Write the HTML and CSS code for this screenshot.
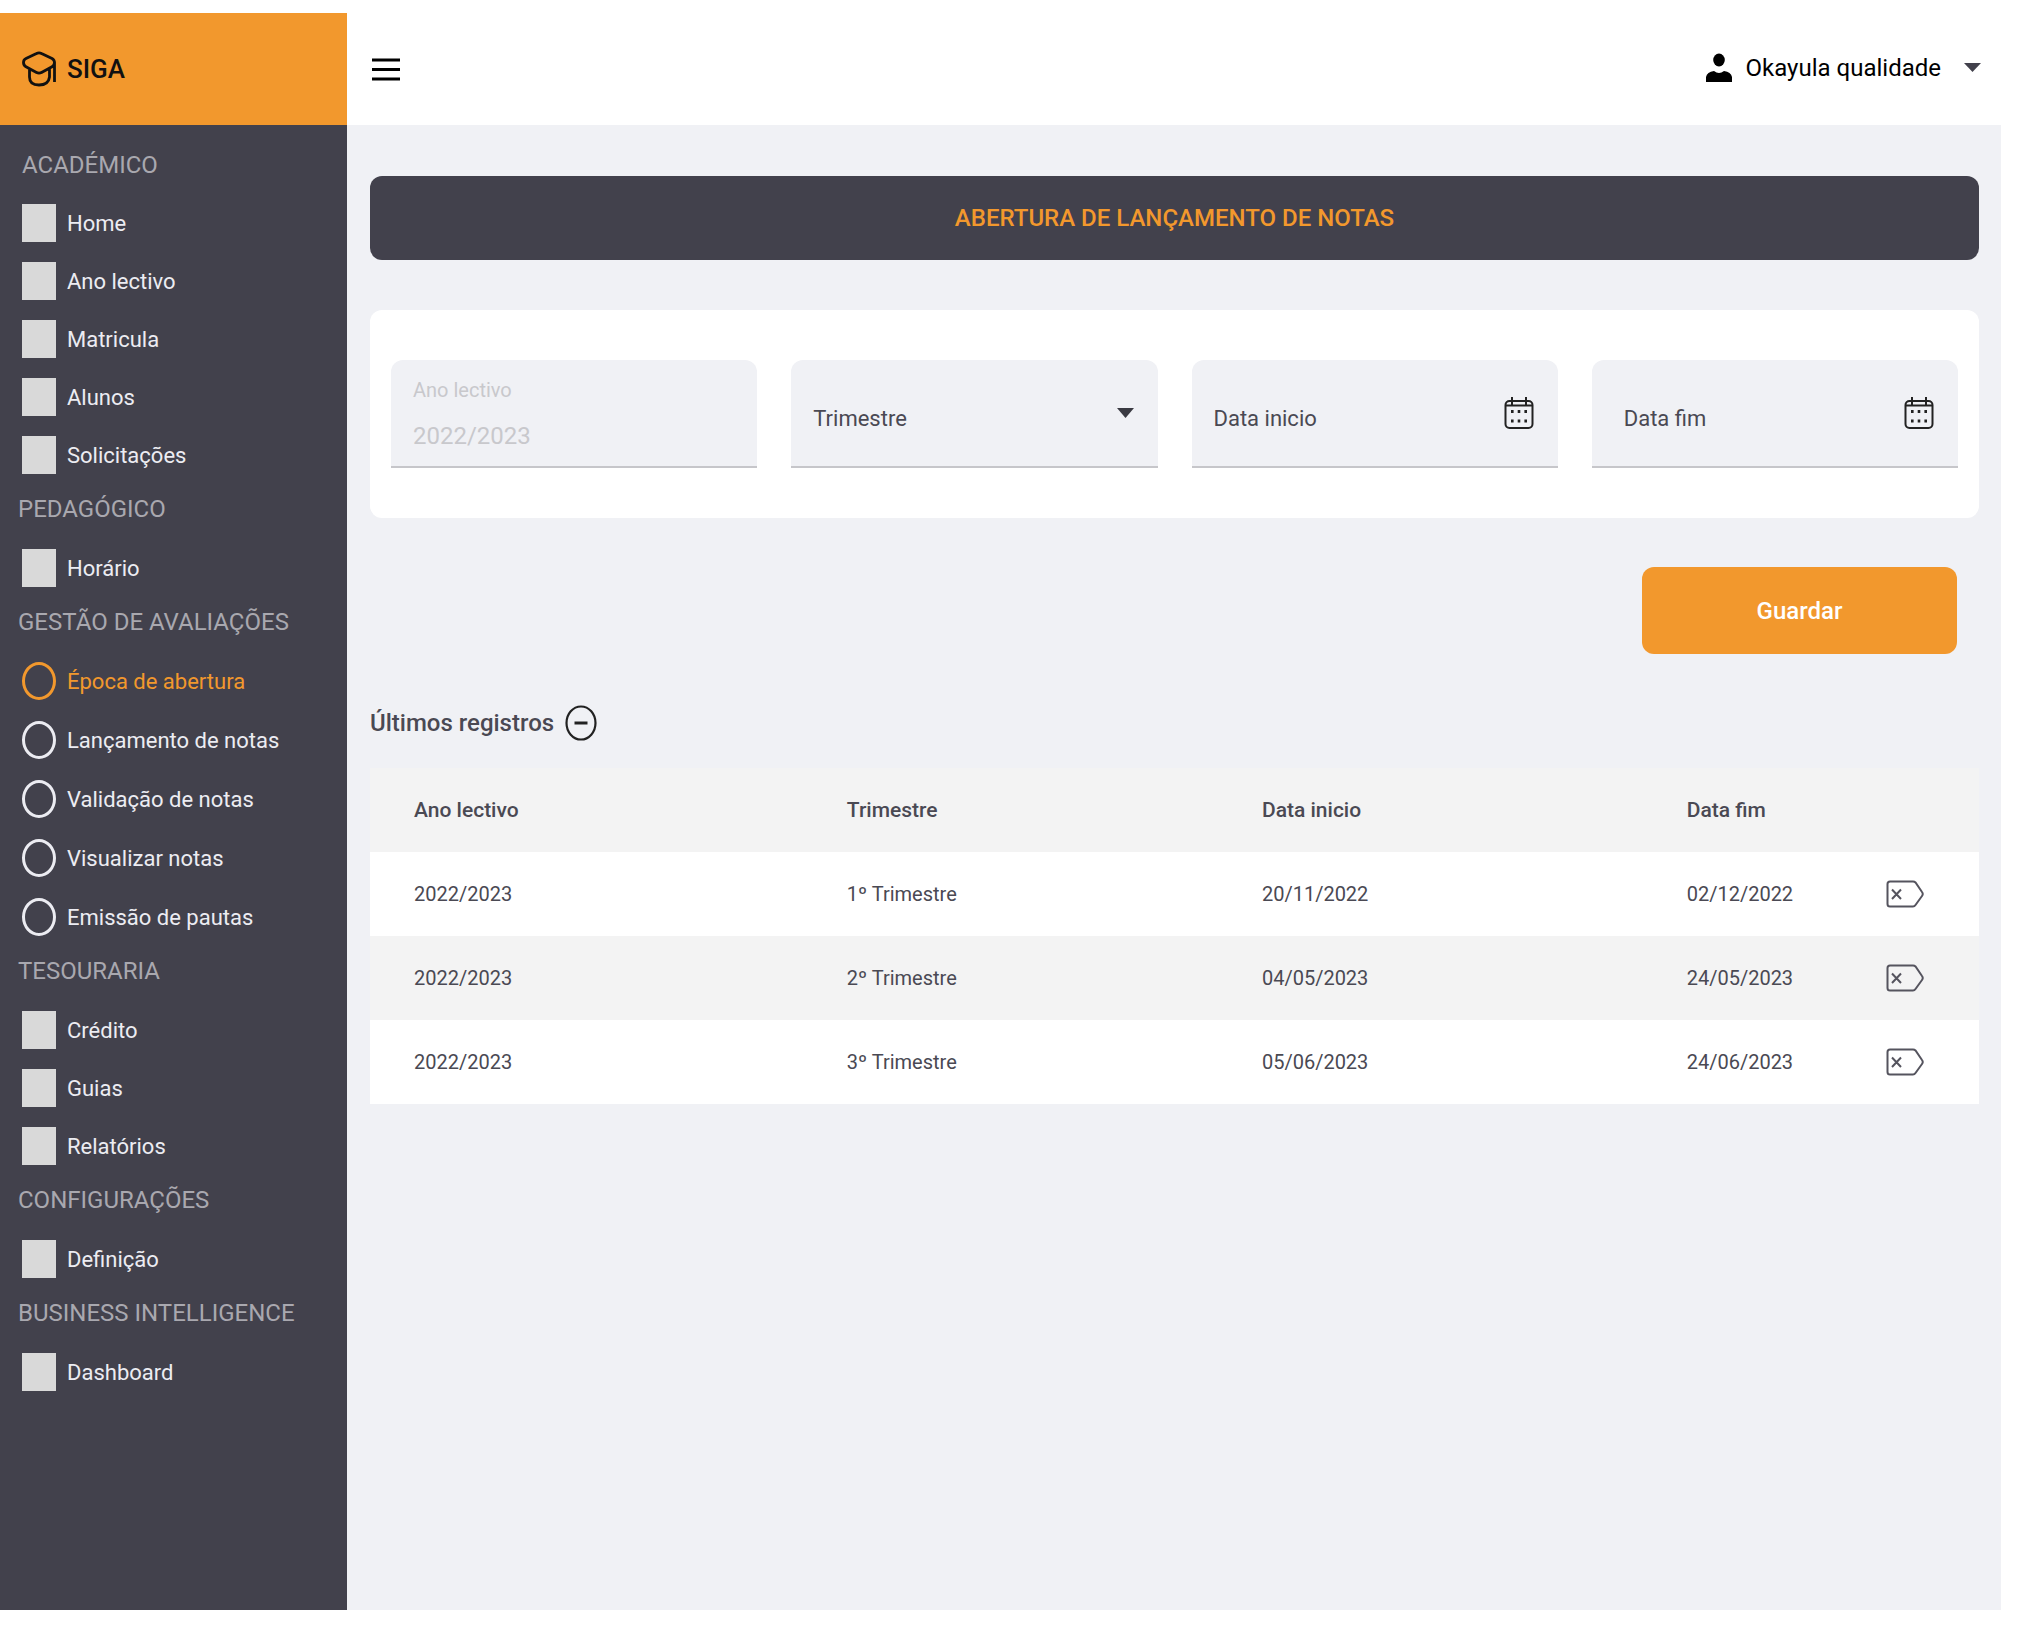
FILE: index.html
```html
<!DOCTYPE html>
<html lang="pt">
<head>
<meta charset="utf-8">
<meta name="viewport" content="width=device-width, initial-scale=1">
<title>SIGA – Abertura de lançamento de notas</title>
<link rel="stylesheet" href="styles.css">
</head>
<body>
<svg class="sprite" aria-hidden="true">
  <symbol id="calendar" viewBox="0 0 30 34">
    <rect x="1.5" y="5" width="27" height="27" rx="4" fill="none" stroke="currentColor" stroke-width="2"/>
    <path d="M2 9.500H28M8 1V10M22 1V10" fill="none" stroke="currentColor" stroke-width="2"/>
    <path d="M7 15.500h2.600M13.700 15.500h2.600M20.400 15.500h2.600M7 25h2.600M13.700 25h2.600M20.400 25h2.600" stroke="currentColor" stroke-width="3"/>
  </symbol>
  <symbol id="remove" viewBox="0 0 38 28">
    <path d="M4 1.500H27Q28.500 1.500 29.500 2.500L36 12Q37.500 14 36 16L29.500 25Q28.500 26.500 27 26.500H4Q1.500 26.500 1.500 24V4Q1.500 1.500 4 1.500Z" fill="none" stroke="currentColor" stroke-width="2"/>
    <path d="M6 9.500L15 19M15 9.500L6 19" fill="none" stroke="currentColor" stroke-width="2"/>
  </symbol>
</svg>
<div class="app">
  <aside class="sidebar">
    <a class="brand" href="#">
      <svg class="brand-icon" viewBox="0 0 34 36" aria-hidden="true">
        <path d="M14.500 2.500Q17 1.200 19.500 2.500L30 7.500Q32.500 9 32.500 11.500T30 15.800L19.500 21.500Q17 22.800 14.500 21.500L4 15.800Q1.500 14.300 1.500 11.500T4 7.500ZM7.500 18V26Q7.500 34 17 34T27.500 26V18M32.500 11V31" fill="none" stroke="currentColor" stroke-width="2.800"/>
      </svg>
      <span>SIGA</span>
    </a>
    <nav class="menu" aria-label="Principal">
      <h2 class="menu-title menu-title-first">ACADÉMICO</h2>
      <ul class="menu-list">
        <li><a class="menu-link" href="#"><span class="square"></span>Home</a></li>
        <li><a class="menu-link" href="#"><span class="square"></span>Ano lectivo</a></li>
        <li><a class="menu-link" href="#"><span class="square"></span>Matricula</a></li>
        <li><a class="menu-link" href="#"><span class="square"></span>Alunos</a></li>
        <li><a class="menu-link" href="#"><span class="square"></span>Solicitações</a></li>
      </ul>
      <h2 class="menu-title">PEDAGÓGICO</h2>
      <ul class="menu-list">
        <li><a class="menu-link" href="#"><span class="square"></span>Horário</a></li>
      </ul>
      <h2 class="menu-title">GESTÃO DE AVALIAÇÕES</h2>
      <ul class="menu-list menu-list-spaced">
        <li><a class="menu-link active" href="#" aria-current="page"><span class="circle"></span>Época de abertura</a></li>
        <li><a class="menu-link" href="#"><span class="circle"></span>Lançamento de notas</a></li>
        <li><a class="menu-link" href="#"><span class="circle"></span>Validação de notas</a></li>
        <li><a class="menu-link" href="#"><span class="circle"></span>Visualizar notas</a></li>
        <li><a class="menu-link" href="#"><span class="circle"></span>Emissão de pautas</a></li>
      </ul>
      <h2 class="menu-title">TESOURARIA</h2>
      <ul class="menu-list">
        <li><a class="menu-link" href="#"><span class="square"></span>Crédito</a></li>
        <li><a class="menu-link" href="#"><span class="square"></span>Guias</a></li>
        <li><a class="menu-link" href="#"><span class="square"></span>Relatórios</a></li>
      </ul>
      <h2 class="menu-title">CONFIGURAÇÕES</h2>
      <ul class="menu-list">
        <li><a class="menu-link" href="#"><span class="square"></span>Definição</a></li>
      </ul>
      <h2 class="menu-title">BUSINESS INTELLIGENCE</h2>
      <ul class="menu-list">
        <li><a class="menu-link" href="#"><span class="square"></span>Dashboard</a></li>
      </ul>
    </nav>
  </aside>

  <div class="page">
    <header class="topbar">
      <button class="icon-button" type="button" aria-label="Menu">
        <svg width="28" height="23" viewBox="0 0 28 23" aria-hidden="true"><path d="M0 2H28M0 11.500H28M0 21H28" stroke="currentColor" stroke-width="3.200"/></svg>
      </button>
      <button class="user" type="button">
        <svg width="26" height="29" viewBox="0 0 26 29" aria-hidden="true"><ellipse cx="13" cy="7" rx="5.800" ry="6.500"/><path d="M0 29V24Q1 19 8 18Q13 22 18 18Q25 19 26 24V29Z"/></svg>
        <span>Okayula qualidade</span>
        <svg class="user-caret" width="17" height="9" viewBox="0 0 17 9" aria-hidden="true"><path d="M0 0H17L8.500 9Z"/></svg>
      </button>
    </header>

    <main class="content">
      <h1 class="page-title">ABERTURA DE LANÇAMENTO DE NOTAS</h1>

      <form class="form">
        <div class="fields">
          <div class="field field-disabled">
            <label class="field-label" for="ano">Ano lectivo</label>
            <input class="control" id="ano" type="text" value="2022/2023" disabled>
          </div>
          <div class="field">
            <select class="control" aria-label="Trimestre">
              <option>Trimestre</option>
              <option>1º Trimestre</option>
              <option>2º Trimestre</option>
              <option>3º Trimestre</option>
            </select>
            <svg class="select-caret" width="17" height="10" viewBox="0 0 17 10" aria-hidden="true"><path d="M0 0H17L8.500 10Z"/></svg>
          </div>
          <div class="field">
            <input class="control" type="text" placeholder="Data inicio" aria-label="Data inicio">
            <button class="icon-button" type="button" aria-label="Escolher data inicio"><svg width="30" height="34" aria-hidden="true"><use href="#calendar"/></svg></button>
          </div>
          <div class="field field-end">
            <input class="control" type="text" placeholder="Data fim" aria-label="Data fim">
            <button class="icon-button" type="button" aria-label="Escolher data fim"><svg width="30" height="34" aria-hidden="true"><use href="#calendar"/></svg></button>
          </div>
        </div>
        <button class="save" type="submit">Guardar</button>
      </form>

      <section class="records">
        <div class="records-head">
          <h2 class="records-title">Últimos registros</h2>
          <button class="icon-button" type="button" aria-label="Recolher">
            <svg width="32" height="36" viewBox="0 0 32 36" aria-hidden="true"><ellipse cx="16" cy="18" rx="14.500" ry="16.500" fill="none" stroke="currentColor" stroke-width="2.200"/><path d="M9.500 18H22.500" stroke="currentColor" stroke-width="3"/></svg>
          </button>
        </div>
        <table class="table">
          <colgroup><col class="col-year"><col class="col-term"><col class="col-start"><col class="col-end"><col></colgroup>
          <thead>
            <tr><th scope="col">Ano lectivo</th><th scope="col">Trimestre</th><th scope="col">Data inicio</th><th scope="col">Data fim</th><td></td></tr>
          </thead>
          <tbody>
            <tr><td>2022/2023</td><td>1º Trimestre</td><td>20/11/2022</td><td>02/12/2022</td><td><button class="icon-button" type="button" aria-label="Eliminar"><svg width="38" height="28" aria-hidden="true"><use href="#remove"/></svg></button></td></tr>
            <tr><td>2022/2023</td><td>2º Trimestre</td><td>04/05/2023</td><td>24/05/2023</td><td><button class="icon-button" type="button" aria-label="Eliminar"><svg width="38" height="28" aria-hidden="true"><use href="#remove"/></svg></button></td></tr>
            <tr><td>2022/2023</td><td>3º Trimestre</td><td>05/06/2023</td><td>24/06/2023</td><td><button class="icon-button" type="button" aria-label="Eliminar"><svg width="38" height="28" aria-hidden="true"><use href="#remove"/></svg></button></td></tr>
          </tbody>
        </table>
      </section>
    </main>
  </div>
</div>
</body>
</html>
```
FILE: styles.css
```css
:root {
  --orange: #f2982d;
  --dark: #42414c;
  --surface: #f0f1f5;
  --text: #4a4953;
}

* { box-sizing: border-box; }

body {
  margin: 0;
  background: #fff;
  color: var(--text);
  font-family: Roboto, "Liberation Sans", sans-serif;
  font-size: 24px;
}

h1, h2, ul { margin: 0; padding: 0; }

button, input, select { font: inherit; color: inherit; }

.sprite { display: none; }

.app {
  display: flex;
  min-height: 100vh;
  padding: 13px 39px 34px 0;
}

/* Sidebar */
.sidebar {
  flex: 0 0 347px;
  background: var(--dark);
}

.brand {
  display: flex;
  align-items: center;
  gap: 11px;
  height: 112px;
  padding-left: 22px;
  background: var(--orange);
  color: #111;
  font-size: 26px;
  font-weight: 500;
  text-decoration: none;
}

.brand-icon { width: 34px; height: 36px; }

.menu-title {
  height: 55px;
  padding: 9px 0 0 18px;
  color: #a9a8af;
  font-size: 24px;
  font-weight: 400;
  line-height: 32px;
}

.menu-title-first {
  height: 69px;
  padding: 24px 0 0 22px;
}

.menu-list { list-style: none; }

.menu-list-spaced { display: grid; gap: 1px; }

.menu-link {
  display: flex;
  align-items: center;
  gap: 11px;
  height: 58px;
  padding-left: 22px;
  color: #ececf2;
  font-size: 22px;
  text-decoration: none;
}

.menu-link.active { color: var(--orange); }

.square, .circle { width: 34px; height: 38px; }
.square { background: #d9d9d9; }
.circle { border: 3px solid currentColor; border-radius: 50%; }

/* Top bar */
.page {
  flex: 1;
  display: flex;
  flex-direction: column;
  min-width: 0;
}

.topbar {
  display: flex;
  align-items: center;
  justify-content: space-between;
  height: 112px;
  padding: 0 20px 0 25px;
}

.icon-button, .user {
  display: flex;
  align-items: center;
  padding: 0;
  border: 0;
  background: none;
  color: #222;
  cursor: pointer;
}

.topbar .icon-button, .user { color: #000; }
.user { gap: 14px; padding-bottom: 3px; }
.user-caret { margin-left: 9px; fill: var(--dark); }

/* Content */
.content {
  flex: 1;
  padding: 51px 22px 50px 23px;
  background: var(--surface);
}

.page-title {
  height: 84px;
  border-radius: 12px;
  background: var(--dark);
  color: var(--orange);
  font-size: 24px;
  font-weight: 500;
  line-height: 84px;
  text-align: center;
}

.fields {
  display: grid;
  grid-template-columns: repeat(4, minmax(0, 1fr));
  gap: 34px;
  margin-top: 50px;
  padding: 50px 21px;
  border-radius: 12px;
  background: #fff;
}

.field {
  display: flex;
  align-items: center;
  height: 108px;
  padding: 0 24px 0 22px;
  border-bottom: 2px solid #c6c6ca;
  border-radius: 12px 12px 0 0;
  background: var(--surface);
  font-size: 22px;
}

.field-end { padding-left: 32px; }

.field-disabled {
  flex-direction: column;
  align-items: stretch;
  padding-top: 16px;
  color: #c8c8cc;
  font-size: 24px;
}

.field-label { font-size: 20px; line-height: 28px; }

.control {
  flex: 1;
  min-width: 0;
  height: 100%;
  padding: 10px 0 0;
  border: 0;
  background: none;
  appearance: none;
}

.control::placeholder { color: inherit; opacity: 1; }

.field-disabled .control {
  flex: none;
  height: 32px;
  margin-top: 16px;
  padding: 0;
}

.select-caret { fill: #3a3a42; pointer-events: none; }

.save {
  display: block;
  width: 315px;
  height: 87px;
  margin: 49px 22px 0 auto;
  border: 0;
  border-radius: 12px;
  background: var(--orange);
  color: #fff;
  font-weight: 500;
  cursor: pointer;
}

/* Records */
.records { margin-top: 51px; }

.records-head {
  display: flex;
  align-items: center;
  gap: 11px;
  margin-bottom: 27px;
}

.records-title {
  font-size: 24px;
  font-weight: 500;
}

.table {
  width: 100%;
  border-collapse: collapse;
  table-layout: fixed;
  background: #fff;
  font-size: 20px;
}

.col-year { width: 26.9%; }
.col-term { width: 25.8%; }
.col-start { width: 26.4%; }
.col-end { width: 12.4%; }

.table th, .table td {
  height: 84px;
  padding: 0 0 0 44px;
  text-align: left;
  white-space: nowrap;
}

.table th { font-size: 21px; font-weight: 500; }
.table thead tr, .table tbody tr:nth-child(even) { background: #f3f3f3; }
.table .icon-button { color: #55545e; }
```
